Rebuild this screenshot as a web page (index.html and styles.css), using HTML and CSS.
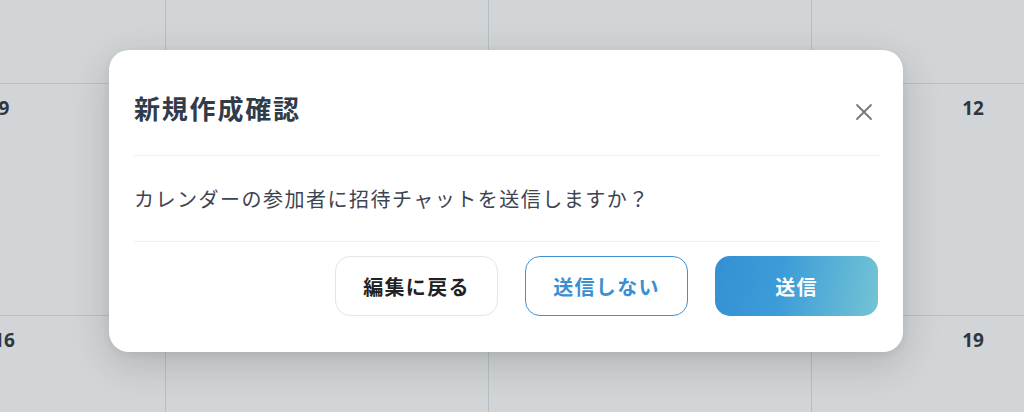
FILE: index.html
```html
<!DOCTYPE html>
<html lang="ja">
<head>
<meta charset="utf-8">
<title>新規作成確認</title>
<link rel="stylesheet" href="styles.css">
</head>
<body>
<div class="page">
  <div class="calendar">
    <div class="cell"></div>
    <div class="cell"></div>
    <div class="cell"></div>
    <div class="cell"></div>
    <div class="cell"><span class="day">9</span></div>
    <div class="cell"><span class="day">10</span></div>
    <div class="cell"><span class="day">11</span></div>
    <div class="cell"><span class="day">12</span></div>
    <div class="cell"><span class="day">16</span></div>
    <div class="cell"><span class="day">17</span></div>
    <div class="cell"><span class="day">18</span></div>
    <div class="cell"><span class="day">19</span></div>
  </div>
  <div class="dialog" role="dialog">
    <div class="dialog-header">
      <h2 class="dialog-title">新規作成確認</h2>
      <button class="close" aria-label="閉じる">
        <svg width="18" height="18" viewBox="0 0 18 18"><path d="M2 2 L16 16 M16 2 L2 16" stroke="#6f7882" stroke-width="1.8" stroke-linecap="round" fill="none"/></svg>
      </button>
    </div>
    <div class="divider"></div>
    <div class="dialog-body">カレンダーの参加者に招待チャットを送信しますか？</div>
    <div class="divider"></div>
    <div class="dialog-footer">
      <button class="btn btn-back">編集に戻る</button>
      <button class="btn btn-outline">送信しない</button>
      <button class="btn btn-primary">送信</button>
    </div>
  </div>
</div>
</body>
</html>
```

FILE: styles.css
```css
* { box-sizing: border-box; }
html, body { margin: 0; padding: 0; background: #ffffff; }
body {
  font-family: "Noto Sans CJK JP", "Noto Sans", sans-serif;
  width: 1024px;
  height: 413px;
  overflow: hidden;
}
.page {
  position: relative;
  height: 412px;
  overflow: hidden;
  background: #d1d5d7;
}
.calendar {
  display: grid;
  grid-template-columns: repeat(4, 323px);
  grid-auto-rows: 232px;
  margin-left: -157px;
  margin-top: -148px;
}
.cell {
  border-right: 1px solid #b9bec2;
  border-bottom: 1px solid #b9bec2;
  text-align: center;
  padding-top: 11px;
}
.day {
  font-family: "Noto Sans", sans-serif;
  font-weight: 700;
  font-size: 19px;
  color: #2f3640;
}
.dialog {
  position: absolute;
  left: 109px;
  top: 50px;
  width: 794px;
  height: 302px;
  background: #ffffff;
  border-radius: 20px;
  box-shadow: 0 12px 40px rgba(0, 0, 0, 0.16), 0 2px 8px rgba(0, 0, 0, 0.06);
  display: flex;
  flex-direction: column;
}
.dialog-header {
  height: 105px;
  padding: 10px 24px 0 25px;
  display: flex;
  align-items: center;
  justify-content: space-between;
}
.dialog-title {
  margin: 0;
  font-size: 26px;
  font-weight: 700;
  letter-spacing: 1.8px;
  color: #313b49;
}
.close {
  border: 0;
  background: none;
  padding: 0;
  margin: 8px 6px 0 0;
  width: 18px;
  height: 18px;
  display: flex;
}
.divider {
  height: 1px;
  background: #eeeff0;
  margin: 0 24px 0 25px;
}
.dialog-body {
  height: 85px;
  padding: 0 25px;
  display: flex;
  align-items: center;
  font-size: 20px;
  letter-spacing: 1.5px;
  color: #3d4450;
}
.dialog-footer {
  flex: 1;
  display: flex;
  justify-content: flex-end;
  align-items: flex-start;
  gap: 27px;
  padding: 14px 25px 0;
}
.btn {
  width: 163px;
  height: 60px;
  border-radius: 15px;
  font-family: "Noto Sans CJK JP", sans-serif;
  font-size: 20px;
  font-weight: 700;
  letter-spacing: 1.3px;
  display: flex;
  align-items: center;
  justify-content: center;
  padding: 0;
}
.btn-back {
  background: #ffffff;
  border: 1px solid #e2e5e9;
  color: #222222;
}
.btn-outline {
  background: #ffffff;
  border: 1.5px solid #3e92d3;
  color: #3a8fd0;
}
.btn-primary {
  border: 0;
  color: #ffffff;
  background: linear-gradient(100deg, #3490d3 0%, #3c9cd8 40%, #74c4d4 100%);
}
```
